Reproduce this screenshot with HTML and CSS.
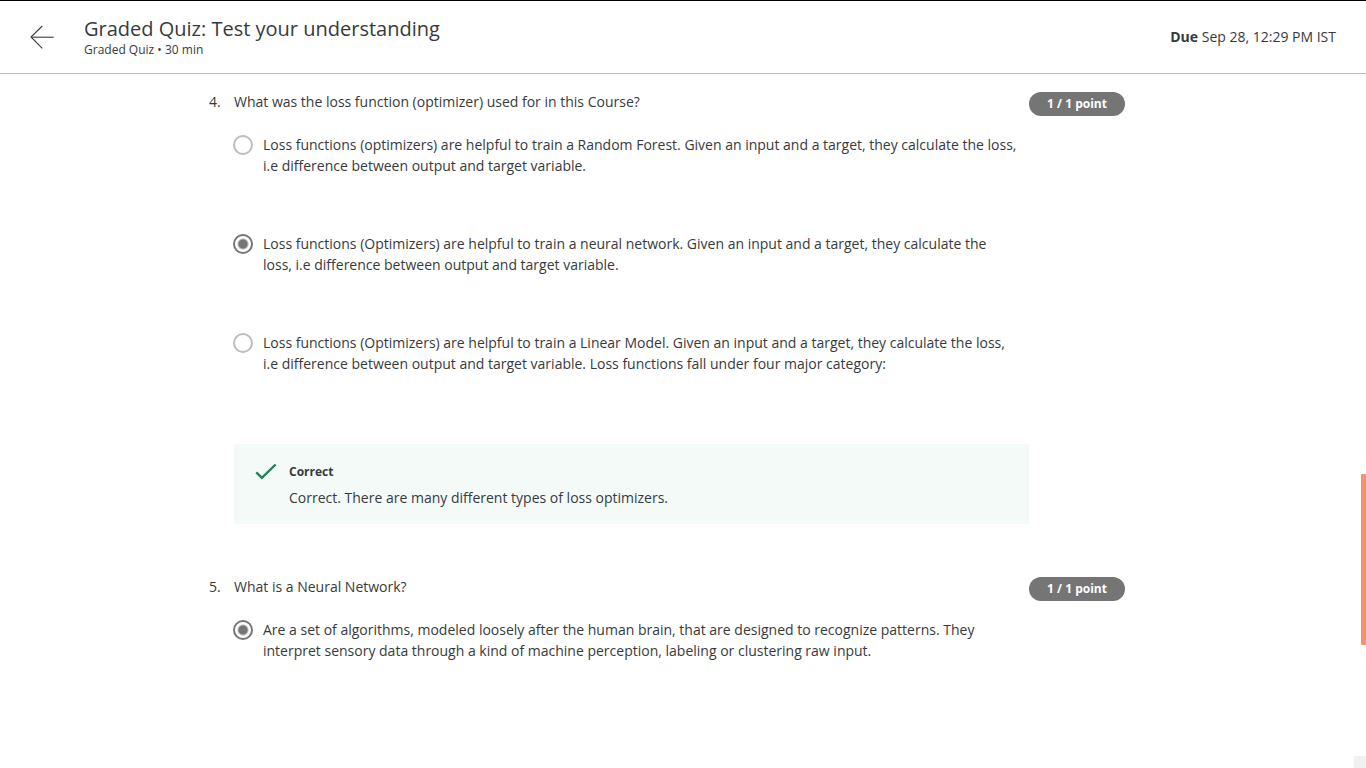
FILE: index.html
```html
<!DOCTYPE html>
<html lang="en">
<head>
<meta charset="utf-8">
<meta name="viewport" content="width=device-width, initial-scale=1">
<title>Graded Quiz: Test your understanding</title>
<link rel="stylesheet" href="styles.css">
</head>
<body>
<header class="topbar">
  <button class="back" type="button" aria-label="Back">
    <svg width="24" height="24" viewBox="0 0 24 24" fill="none" stroke="#373a3c" stroke-width="1.1" aria-hidden="true"><path d="M12.3 1L1 12l11.3 11.3"/><path d="M1 12.2h22.700"/></svg>
  </button>
  <div class="heading">
    <h1 class="title">Graded Quiz: Test your understanding</h1>
    <p class="subtitle">Graded Quiz • 30 min</p>
  </div>
  <p class="due"><strong>Due</strong> Sep 28, 12:29 PM IST</p>
</header>

<main class="quiz">
  <section class="question">
    <span class="number">4.</span>
    <div class="body">
      <h2 class="prompt" id="q4">What was the loss function (optimizer) used for in this Course?</h2>
      <div class="options" role="radiogroup" aria-labelledby="q4">
        <label class="option"><input class="radio" type="radio" name="q4"><span>Loss functions (optimizers) are helpful to train a Random Forest. Given an input and a target, they calculate the loss, i.e difference between output and target variable.</span></label>
        <label class="option"><input class="radio" type="radio" name="q4" checked><span>Loss functions (Optimizers) are helpful to train a neural network. Given an input and a target, they calculate the loss, i.e difference between output and target variable.</span></label>
        <label class="option"><input class="radio" type="radio" name="q4"><span>Loss functions (Optimizers) are helpful to train a Linear Model. Given an input and a target, they calculate the loss, i.e difference between output and target variable. Loss functions fall under four major category:</span></label>
      </div>
      <div class="feedback">
        <svg class="check" width="24" height="24" viewBox="0 0 24 24" fill="none" stroke="#1f8354" stroke-width="2.4" aria-hidden="true"><path d="M2.300 12.300l5.600 5.500L21.600 4.500"/></svg>
        <div>
          <h3 class="verdict">Correct</h3>
          <p class="explanation">Correct. There are many different types of loss optimizers.</p>
        </div>
      </div>
    </div>
    <span class="points">1 / 1 point</span>
  </section>

  <section class="question">
    <span class="number">5.</span>
    <div class="body">
      <h2 class="prompt" id="q5">What is a Neural Network?</h2>
      <div class="options" role="radiogroup" aria-labelledby="q5">
        <label class="option"><input class="radio" type="radio" name="q5" checked><span>Are a set of algorithms, modeled loosely after the human brain, that are designed to recognize patterns. They interpret sensory data through a kind of machine perception, labeling or clustering raw input.</span></label>
      </div>
    </div>
    <span class="points">1 / 1 point</span>
  </section>
</main>
<div class="scroll-thumb"></div>
<div class="scroll-corner"></div>
</body>
</html>
```

FILE: styles.css
```css
* {
  box-sizing: border-box;
}

body {
  margin: 0;
  background: #fff;
  color: #373a3c;
  font: 14px/21px "Open Sans", "Noto Sans", sans-serif;
}

h1, h2, h3, p {
  margin: 0;
  font-weight: 400;
}

.topbar {
  display: flex;
  align-items: center;
  gap: 30px;
  padding: 14px 30px 15px;
  border-top: 1px solid #000;
  border-bottom: 1px solid #bdbdbd;
}

.back {
  display: flex;
  padding: 0;
  border: 0;
  background: none;
  cursor: pointer;
}

.heading {
  flex: 1;
}

.title {
  font-size: 20px;
  line-height: 27px;
}

.subtitle {
  font-size: 12px;
  line-height: 16px;
}

.quiz {
  display: flex;
  flex-direction: column;
  gap: 52px;
  max-width: 948px;
  margin: 17px auto 0;
  padding-right: 32px;
}

.question {
  display: grid;
  grid-template-columns: 25px minmax(0, 1fr) 96px;
  align-items: start;
}

.prompt {
  font-size: 14px;
}

.options {
  display: flex;
  flex-direction: column;
  gap: 57px;
  margin-top: 22px;
}

.option {
  display: flex;
  align-items: flex-start;
  gap: 10px;
  padding-right: 12px;
  margin-left: -1px;
}

.radio {
  appearance: none;
  flex: none;
  width: 20px;
  height: 20px;
  margin: 1px 0 0;
  border: 2px solid #bdbdbd;
  border-radius: 50%;
}

.radio:checked {
  border-color: #757575;
  background: radial-gradient(circle, #757575 4px, #fff 6px);
}

.feedback {
  display: flex;
  gap: 11px;
  margin-top: 70px;
  padding: 16px 20px;
  background: #f3faf8;
}

.check {
  flex: none;
}

.verdict {
  font-size: 12px;
  font-weight: 700;
  line-height: 23px;
}

.explanation {
  margin-top: 4px;
}

.points {
  margin-top: 1px;
  border-radius: 12px;
  background: #757575;
  color: #fff;
  font-size: 12px;
  font-weight: 700;
  line-height: 24px;
  text-align: center;
}

.scroll-thumb {
  position: fixed;
  top: 474px;
  right: 0;
  width: 5px;
  height: 171px;
  border-radius: 1px;
  background: #f4936d;
}

.scroll-corner {
  position: fixed;
  right: 0;
  bottom: 0;
  width: 12px;
  height: 12px;
  background: #f1f1f0;
}
```
